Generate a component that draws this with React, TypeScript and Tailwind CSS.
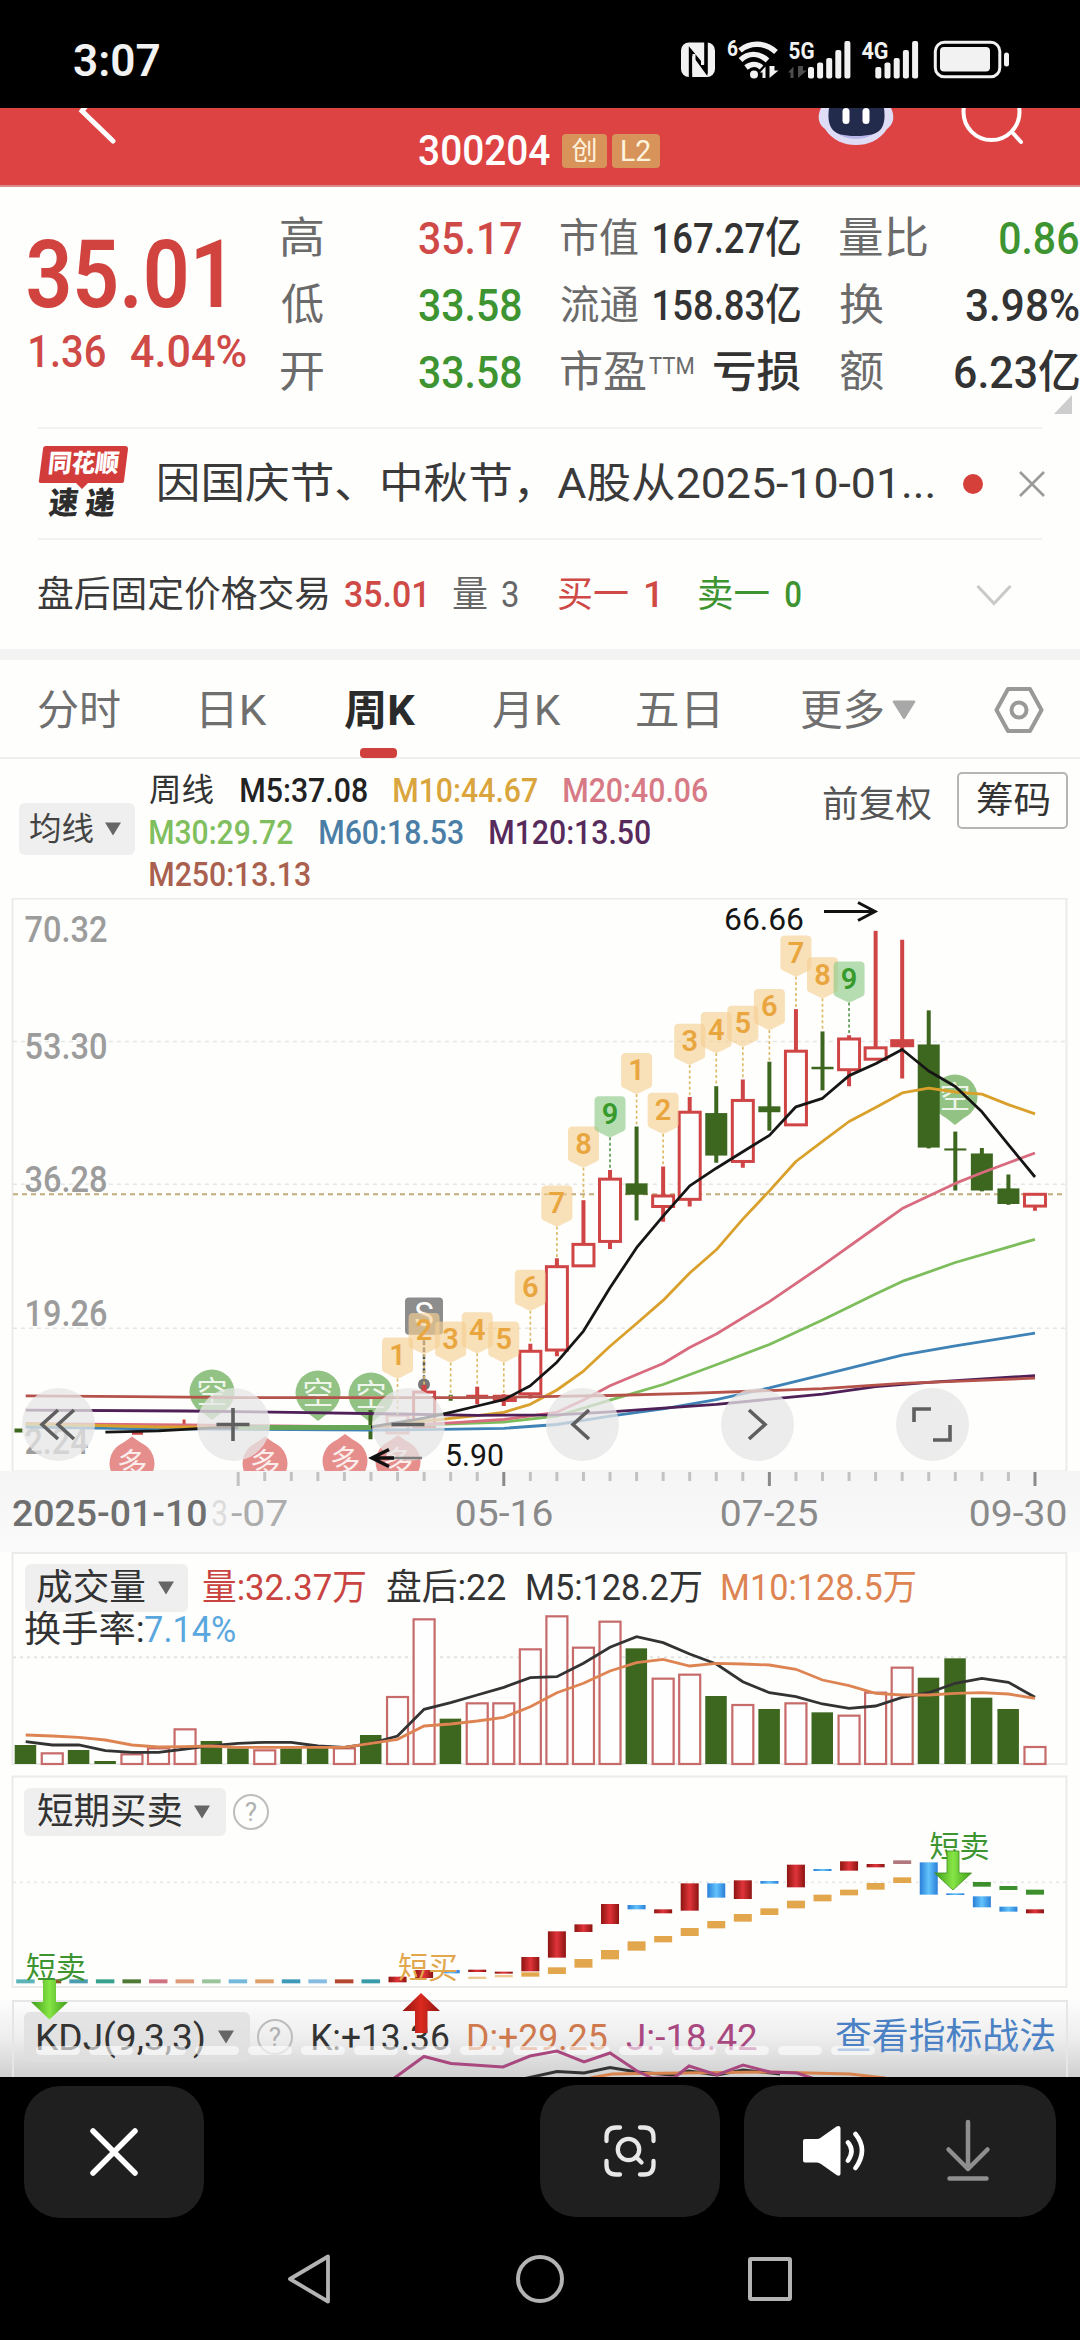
import React, { useLayoutEffect, useRef, useState } from "react";

/** Single-line text whose ink is stretched to the width set by its class. */
function Fit({ children, className = "" }: { children: string; className?: string }) {
  const outer = useRef<HTMLSpanElement>(null);
  const [t, setT] = useState("none");
  useLayoutEffect(() => {
    const el = outer.current;
    const ctx = document.createElement("canvas").getContext("2d");
    if (!el || !ctx) return;
    const s = getComputedStyle(el);
    ctx.font = `${s.fontStyle} ${s.fontWeight} ${s.fontSize} ${s.fontFamily}`;
    const m = ctx.measureText(children);
    const k = el.clientWidth / (m.actualBoundingBoxLeft + m.actualBoundingBoxRight);
    setT(`translateX(${m.actualBoundingBoxLeft * k}px) scaleX(${k})`);
  }, [children]);
  return (
    <span ref={outer} className={"block shrink-0 whitespace-nowrap leading-none " + className}>
      <span className="inline-block origin-left" style={{ transform: t }}>
        {children}
      </span>
    </span>
  );
}

const X = (i: number) => 25.7 + 26.56 * i;
const Y = (p: number) => 890 + p / 2.376;
const V = (p: number) => 1540 + p / 3;
const S = (p: number) => 1770 + p / 3;
const RED = "#cf4545";
const GREEN = "#3d661f";

const line = (f: (p: number) => number, pts: number[][]) =>
  pts.map(([i, p]) => `${X(i).toFixed(1)},${f(p).toFixed(1)}`).join(" ");

type Candle = [number, "r" | "g", number, number, number, number];
const candles: Candle[] = [
  [14, "r", 1248, 1248, 1290, 1290],
  [15, "r", 1178, 1193, 1275, 1275],
  [19, "r", 1078, 1096, 1197, 1208],
  [20, "r", 875, 895, 1093, 1108],
  [21, "r", 737, 842, 893, 893],
  [22, "r", 665, 687, 835, 853],
  [23, "g", 562, 697, 724, 785],
  [24, "r", 657, 727, 752, 788],
  [25, "r", 492, 528, 735, 752],
  [26, "g", 466, 530, 631, 648],
  [27, "r", 450, 500, 645, 660],
  [28, "g", 408, 514, 528, 572],
  [29, "r", 283, 383, 558, 558],
  [30, "g", 336, 420, 426, 476],
  [31, "r", 345, 354, 427, 466],
  [32, "r", 97, 375, 402, 402],
  [33, "r", 118, 358, 370, 448],
  [34, "g", 286, 367, 612, 614],
  [35, "g", 574, 614, 619, 714],
  [36, "g", 613, 626, 714, 716],
  [37, "g", 676, 709, 746, 748],
  [38, "r", 722, 723, 751, 762],
];

const badges: [number, string, number, number][] = [
  [14, "1", 1063, 1248], [15, "2", 1005, 1175], [16, "3", 1025, 1204], [17, "4", 1003, 1180],
  [18, "5", 1025, 1200], [19, "6", 902, 1078], [20, "7", 702, 875], [21, "8", 562, 737],
  [22, "9", 490, 665], [23, "1", 387, 562], [24, "2", 482, 657], [25, "3", 318, 492],
  [26, "4", 290, 466], [27, "5", 275, 450], [28, "6", 235, 408], [29, "7", 108, 283],
  [30, "8", 160, 336], [31, "9", 170, 345],
];

const mas: [string, number[][]][] = [
  ["#3f82b6", [[0, 1276], [4, 1280], [13, 1283], [15, 1282], [18, 1279], [20, 1270], [22, 1250], [24, 1233], [26, 1211], [28, 1183], [30, 1152], [33, 1105], [35, 1083], [38, 1053]]],
  ["#7dbd5c", [[0, 1270], [4, 1274], [13, 1275], [15, 1271], [18, 1264], [20, 1250], [22, 1212], [24, 1175], [26, 1128], [28, 1080], [30, 1022], [32, 960], [33, 930], [35, 885], [38, 830]]],
  ["#d96b7f", [[0, 1268], [6, 1271], [13, 1276], [16, 1266], [18, 1258], [20, 1241], [21, 1212], [22, 1178], [24, 1125], [25, 1087], [26, 1055], [28, 978], [30, 892], [32, 802], [33, 757], [35, 697], [36, 672], [38, 625]]],
  ["#d9a02b", [[0, 1268], [5, 1276], [13, 1276], [15, 1262], [17, 1249], [18, 1241], [19, 1222], [20, 1188], [21, 1143], [22, 1084], [23, 1030], [24, 975], [25, 910], [26, 855], [27, 782], [28, 715], [29, 645], [30, 597], [31, 550], [32, 517], [33, 482], [34, 471], [35, 480], [36, 485], [37, 510], [38, 532]]],
  ["#4f1f57", [[0, 1236], [6, 1238], [10, 1241], [14, 1245], [17, 1248], [20, 1247], [22, 1240], [26, 1222], [30, 1198], [32, 1180], [34, 1170], [38, 1154]]],
  ["#b5534b", [[0, 1202], [4, 1204], [8, 1206], [17, 1206], [20, 1203], [22, 1201], [25, 1196], [30, 1185], [33, 1172], [38, 1160]]],
  ["#161616", [[3, 1288], [5, 1285], [7, 1278], [13, 1276], [15, 1255], [16, 1241], [17, 1226], [18, 1211], [19, 1178], [20, 1122], [21, 1048], [22, 945], [23, 850], [24, 775], [25, 703], [26, 661], [27, 622], [28, 583], [29, 515], [30, 495], [31, 441], [32, 413], [33, 379], [34, 430], [35, 467], [36, 527], [37, 605], [38, 682]]],
];

function Down({ className = "" }: { className?: string }) {
  return (
    <svg viewBox="0 0 18 14" className={"block h-[14px] w-[18px] shrink-0 " + className}>
      <path d="M1 0.5h16L9 13.5z" fill="currentColor" />
    </svg>
  );
}

function Help({ className = "" }: { className?: string }) {
  return (
    <span className={"flex size-9 shrink-0 items-center justify-center rounded-full border-[2.5px] border-[#bdbdbd] text-[26px] leading-none text-[#b0b0b0] " + className}>
      ?
    </span>
  );
}

function StatusBar() {
  return (
    <div className="flex h-[108px] items-start bg-black text-[#f2f2f2]">
      <Fit className="ml-[74px] mt-[38px] w-[85px] text-[45px] font-semibold">3:07</Fit>
      <svg viewBox="680 36 332 46" className="ml-[521px] mt-[36px] h-[46px] w-[332px] shrink-0" fill="#f2f2f2">
        <rect x="681" y="42.5" width="34" height="34.5" rx="8" />
        <path d="M690.5 77V51l15.5 18.5V42" fill="none" stroke="#000" strokeWidth="3.4" />
        <path d="M690 50l16 22V42" fill="none" stroke="#000" strokeWidth="2.6" />
        <path d="M694 54v19M702.500 46v19" stroke="#f2f2f2" strokeWidth="3" />
        <text x="727" y="55.500" fontSize="22" fontWeight="700" textLength="11" lengthAdjust="spacingAndGlyphs">6</text>
        <g fill="none" stroke="#f2f2f2" strokeWidth="5.500">
          <path d="M740 50.500c10-8.500 25-8.500 36 1.500" />
          <path d="M740.500 60c8-7.500 18-7.500 27 0.500" />
          <path d="M746 67.500c5-4 11-4 15.500 0" />
        </g>
        <circle cx="754" cy="74.500" r="4" />
        <path d="M760 72.500l5.500-6V78h-3v-5.500zM769.500 66v12l9-7.500h-4V66z" />
        <text x="788.500" y="59" fontSize="24" fontWeight="700" textLength="26" lengthAdjust="spacingAndGlyphs">5G</text>
        <path d="M788 72.500l5.500-6V78h-3v-5.500zM798 66v12l9-7.500h-4V66z" fill="#4d4d4d" />
        {[67, 62.5, 58, 50, 41].map((y, i) => (
          <rect key={i} x={808 + i * 9.1} y={y} width="6" height={78.5 - y} rx="2" />
        ))}
        <text x="861.500" y="59" fontSize="24" fontWeight="700" textLength="27" lengthAdjust="spacingAndGlyphs">4G</text>
        {[67, 62.5, 58, 50, 41].map((y, i) => (
          <rect key={i} x={875.3 + i * 9.2} y={y} width="6" height={78.5 - y} rx="2" />
        ))}
        <rect x="935.300" y="42.300" width="64.500" height="34.500" rx="9" fill="none" stroke="#f2f2f2" strokeWidth="3" />
        <rect x="940" y="47" width="50" height="24.500" rx="4" />
        <rect x="1004" y="52.500" width="5" height="14" rx="2.500" />
      </svg>
    </div>
  );
}

function Header() {
  return (
    <div className="flex h-[79px] items-start border-b-2 border-[#d98a8a] bg-[#dd4343] text-white">
      <svg viewBox="76 108 44 38" className="ml-[76px] h-[38px] w-[44px] shrink-0" fill="none" stroke="#fff" strokeWidth="5" strokeLinecap="round">
        <path d="M90 101l-8 10 31 30" />
      </svg>
      <Fit className="ml-[299px] mt-[21px] w-[131px] text-[43px] font-medium">300204</Fit>
      <span className="ml-3 mt-[26px] flex h-[34px] w-[45px] items-center justify-center rounded bg-[#d7935a] text-[26px] text-[#fff3de]">创</span>
      <span className="ml-[5px] mt-[26px] flex h-[34px] w-[48px] items-center justify-center rounded bg-[#d7935a] text-[#fff3de]">
        <Fit className="w-[29px] text-[29px]">L2</Fit>
      </span>
      <svg viewBox="818 108 80 42" className="ml-[157px] h-[42px] w-20 shrink-0">
        <path d="M822 108h70c4 8 3 16-4 21-8 12-19 16-31 16s-23-4-31-16c-7-5-8-13-4-21z" fill="#dfdcf6" />
        <path d="M831 122c4 12 14 17 26 17s22-5 26-17z" fill="#b9b6ea" />
        <path d="M830 108h55c1 8 1 15-3 21-4 5-12 7-25 7s-20-2-24-7c-4-6-4-13-3-21z" fill="#232b4d" />
        <rect x="843.500" y="108" width="7" height="16" rx="3.500" fill="#fff" />
        <rect x="863.500" y="108" width="7" height="16" rx="3.500" fill="#fff" />
      </svg>
      <svg viewBox="960 108 70 40" className="ml-[62px] h-10 w-[70px] shrink-0" fill="none" stroke="#fff" strokeWidth="4" strokeLinecap="round">
        <circle cx="992.500" cy="112" r="28" />
        <path d="M1013 132l9 10" />
      </svg>
    </div>
  );
}

function Quote() {
  return (
    <div className="relative flex h-[240px] text-[#333]">
      <div className="flex w-[281px] shrink-0 flex-col">
        <Fit className="ml-7 mt-[41px] w-[194px] text-[94px] font-semibold text-[#d0433f]">35.01</Fit>
        <div className="mt-[7px] flex text-[#cf4a47]">
          <Fit className="ml-[30px] w-[75px] text-[45px] font-medium">1.36</Fit>
          <Fit className="ml-[26px] w-[115px] text-[45px] font-medium">4.04%</Fit>
        </div>
      </div>
      <div className="mt-[18px] flex flex-col text-[#6b6b6b]">
        <div className="flex h-[67px] items-center">
          <Fit className="w-[42px] text-[43px]">高</Fit>
          <Fit className="ml-24 w-[102px] text-[45px] font-medium text-[#cf4a47]">35.17</Fit>
          <Fit className="ml-10 w-[77px] text-[40px]">市值</Fit>
          <Fit className="ml-4 w-[146px] text-[43px] text-[#333] font-medium">167.27亿</Fit>
          <Fit className="ml-[40px] w-[87px] text-[43px]">量比</Fit>
          <Fit className="ml-[73px] w-[78px] text-[45px] font-medium text-[#3d9430]">0.86</Fit>
        </div>
        <div className="flex h-[67px] items-center">
          <Fit className="w-[42px] text-[43px]">低</Fit>
          <Fit className="ml-24 w-[102px] text-[45px] font-medium text-[#3d9430]">33.58</Fit>
          <Fit className="ml-10 w-[77px] text-[40px]">流通</Fit>
          <Fit className="ml-4 w-[146px] text-[43px] text-[#333] font-medium">158.83亿</Fit>
          <Fit className="ml-[40px] w-[43px] text-[43px]">换</Fit>
          <Fit className="ml-[83px] w-[113px] text-[45px] font-medium text-[#333]">3.98%</Fit>
        </div>
        <div className="flex h-[67px] items-center">
          <Fit className="w-[42px] text-[43px]">开</Fit>
          <Fit className="ml-24 w-[102px] text-[45px] font-medium text-[#3d9430]">33.58</Fit>
          <Fit className="ml-10 w-[85px] text-[43px]">市盈</Fit>
          <Fit className="ml-[3px] mb-[14px] w-[44px] text-[24px]">TTM</Fit>
          <Fit className="ml-[21px] w-[86px] text-[43px] text-[#333] font-medium">亏损</Fit>
          <Fit className="ml-[40px] w-[43px] text-[43px]">额</Fit>
          <Fit className="ml-[72px] w-[124px] text-[45px] font-medium text-[#333]">6.23亿</Fit>
        </div>
      </div>
      <svg viewBox="0 0 18 19" className="absolute bottom-[13px] right-[8px] h-[19px] w-[18px]">
        <path d="M18 0v19H0z" fill="#cdcdcd" />
      </svg>
    </div>
  );
}

function News() {
  return (
    <div className="mx-[38px] flex h-[111px] items-center border-t-2 border-[#f2f2f2]">
      <div className="flex h-[78px] w-[92px] shrink-0 flex-col">
        <div className="relative h-[39px] w-[91px]">
          <svg viewBox="0 0 91 46" className="absolute left-0 top-0 h-[46px] w-[91px]">
            <path d="M8 1h79q3 0 3 3l-4 32q0 2-3 2H50l-6 6-6-6H3q-3 0-2-3L5 4q0-3 3-3z" fill="#d23c3a" />
          </svg>
          <Fit className="relative left-[11px] top-[6px] w-[70px] -skew-x-6 text-[25px] font-black text-white">同花顺</Fit>
        </div>
        <Fit className="ml-[11px] mt-[4px] w-[66px] -skew-x-6 text-[31px] font-black text-[#2d2d2d]">速 递</Fit>
      </div>
      <Fit className="ml-[29px] w-[774px] text-[42px] text-[#3a3a3a]">因国庆节、中秋节，A股从2025-10-01...</Fit>
      <span className="ml-[30px] size-5 shrink-0 rounded-full bg-[#d6403b]" />
      <svg viewBox="0 0 26 26" className="ml-[36px] size-[26px] shrink-0" stroke="#9a9a9a" strokeWidth="2.600">
        <path d="M1 1l24 24M25 1L1 25" />
      </svg>
    </div>
  );
}

function FixedPrice() {
  return (
    <div className="mx-[38px] flex h-[111px] items-center border-t-2 border-[#f2f2f2]">
      <Fit className="w-[290px] text-[36px] text-[#3a3a3a]">盘后固定价格交易</Fit>
      <Fit className="ml-[17px] w-[79px] text-[37px] font-medium text-[#cf4a47]">35.01</Fit>
      <Fit className="ml-[29px] w-[34px] text-[36px] text-[#666]">量</Fit>
      <Fit className="ml-[15px] w-4 text-[37px] text-[#666]">3</Fit>
      <Fit className="ml-10 w-[70px] text-[36px] text-[#cf4a47]">买一</Fit>
      <Fit className="ml-[18px] w-[11px] text-[37px] font-medium text-[#cf4a47]">1</Fit>
      <Fit className="ml-[42px] w-[70px] text-[36px] text-[#3d9430]">卖一</Fit>
      <Fit className="ml-[16px] w-4 text-[37px] font-medium text-[#3d9430]">0</Fit>
      <svg viewBox="0 0 36 22" className="ml-[175px] h-[22px] w-9" fill="none" stroke="#c9c9c9" strokeWidth="3">
        <path d="M1.500 2L18 19.500 34.500 2" />
      </svg>
    </div>
  );
}

function Tabs() {
  return (
    <div className="relative flex h-[99px] items-center border-b-2 border-[#efefef] pt-[5px] text-[42px] text-[#6f6f6f]">
      <Fit className="ml-[38px] w-[82px]">分时</Fit>
      <Fit className="ml-[82px] w-[65px]">日K</Fit>
      <div className="ml-[77px] w-[71px] shrink-0">
        <Fit className="w-[71px] font-bold text-[#2b2b2b]">周K</Fit>
        <span className="absolute bottom-[-1px] left-[360px] h-[10px] w-[37px] rounded bg-[#d0403c]" />
      </div>
      <Fit className="ml-[78px] w-[68px]">月K</Fit>
      <Fit className="ml-[76px] w-[80px]">五日</Fit>
      <Fit className="ml-[84px] w-[82px]">更多</Fit>
      <svg viewBox="0 0 24 20" className="mb-[2px] ml-[9px] h-5 w-6 shrink-0">
        <path d="M2 0.500h20q2 0 1 2L13 18.500q-1 1-2 0L1 2.500q-1-2 1-2z" fill="#a8a8a8" />
      </svg>
      <svg viewBox="0 0 50 48" className="mb-[2px] ml-[78px] h-12 w-[50px] shrink-0" fill="none" stroke="#999" strokeWidth="4" strokeLinejoin="round">
        <path d="M14 3h22l11.500 21L36 45H14L2.500 24z" />
        <circle cx="25" cy="24" r="7.500" />
      </svg>
    </div>
  );
}

function Legend() {
  return (
    <div className="flex h-[139px] items-start">
      <div className="ml-[19px] mt-[44px] flex h-[52px] w-[116px] shrink-0 items-center rounded-md bg-[#efefef] text-[#444]">
        <Fit className="ml-[11px] w-[63px] text-[32px]">均线</Fit>
        <Down className="ml-[11px] text-[#666]" />
      </div>
      <div className="ml-[15px] mt-[10px] flex w-[673px] shrink-0 flex-col text-[34px] font-medium">
        <div className="flex h-[42px] items-center">
          <Fit className="w-[63px] text-[32px] font-normal text-[#333]">周线</Fit>
          <Fit className="ml-7 w-[126px] text-[#222]">M5:37.08</Fit>
          <Fit className="ml-[27px] w-[143px] text-[#d9a53c]">M10:44.67</Fit>
          <Fit className="ml-[27px] w-[143px] text-[#d77a86]">M20:40.06</Fit>
        </div>
        <div className="flex h-[42px] items-center">
          <Fit className="w-[143px] text-[#80be5e]">M30:29.72</Fit>
          <Fit className="ml-[27px] w-[143px] text-[#4a7ea6]">M60:18.53</Fit>
          <Fit className="ml-[27px] w-[160px] text-[#572a5c]">M120:13.50</Fit>
        </div>
        <div className="flex h-[42px] items-center">
          <Fit className="w-[160px] text-[#a9604e]">M250:13.13</Fit>
        </div>
      </div>
      <Fit className="mt-[28px] w-[108px] text-[36px] text-[#555]">前复权</Fit>
      <div className="ml-[26px] mt-[13px] flex h-[57px] w-[111px] items-center justify-center rounded-[5px] border-2 border-[#b5b5b5]">
        <Fit className="w-[72px] text-[36px] text-[#333]">筹码</Fit>
      </div>
    </div>
  );
}

function Marker({ x, y, ch, up }: { x: number; y: number; ch: string; up?: boolean }) {
  return (
    <g>
      <circle cx={x} cy={y} r="22.500" fill={up ? "#e58e8b" : "#93c384"} />
      <path d={up ? `M${x - 14} ${y - 17}L${x} ${y - 27}L${x + 14} ${y - 17}z` : `M${x - 14} ${y + 17}L${x} ${y + 28}L${x + 14} ${y + 17}z`} fill={up ? "#e58e8b" : "#93c384"} />
      <text x={x} y={y + 11} textAnchor="middle" fontSize="31" fill="#fff" fillOpacity="0.85">{ch}</text>
    </g>
  );
}

const tools = [
  "M23 8L7 22.500 23 37M39 8L23 22.500 39 37",
  "M6 22.500h33M22.500 6v33",
  "M6 22.500h33",
  "M30 8L14 22.500 30 37",
  "M15 8l16 14.500L15 37",
  "M6 20V7h17M42 23v15H25",
];

function KChart() {
  return (
    <div className="relative h-[573px]">
      <svg viewBox="0 898 1080 573" className="block h-[573px] w-[1080px]">
        <rect x="12.500" y="898.500" width="1054" height="573" fill="none" stroke="#ebebeb" strokeWidth="2" />
        {[360, 699, 1041].map((p) => (
          <path key={p} d={`M13 ${Y(p)}H1066`} stroke="#e6e6e6" strokeWidth="1.500" strokeDasharray="4 4" />
        ))}
        {[["70.32", 95], ["53.30", 373], ["36.28", 690], ["19.26", 1008], ["2.24", 1312]].map(([t, p]) => (
          <text key={t} x="24.500" y={Y(p as number) + 12} fontSize="36" fontWeight="500" fill="#9c9c9c" textLength={t === "2.24" ? 64 : 83} lengthAdjust="spacingAndGlyphs">{t}</text>
        ))}
        <path d={`M13 ${Y(723)}H1066`} stroke="#c2ac7c" strokeWidth="2" strokeDasharray="5 4" />
        <Marker x={132} y={1463.500} ch="多" up />
        <Marker x={265} y={1463.500} ch="多" up />
        <Marker x={345} y={1461} ch="多" up />
        <Marker x={398} y={1462} ch="多" up />
        <Marker x={212} y={1392} ch="空" />
        <Marker x={318} y={1393} ch="空" />
        <Marker x={371} y={1395} ch="空" />
        <Marker x={955} y={1097} ch="空" />
        {candles.map(([i, c, hi, top, bot, lo]) => {
          const x = X(i);
          return c === "r" ? (
            <g key={i} stroke={RED} fill="none" opacity={i === 14 ? 0.6 : 1}>
              <path d={`M${x} ${Y(hi)}V${Y(top)}M${x} ${Y(bot)}V${Y(lo)}`} strokeWidth="4" />
              <rect x={x - 10.5} y={Y(top)} width="21" height={Y(bot) - Y(top)} strokeWidth="3" fill={i === 33 ? RED : "#fefefe"} />
            </g>
          ) : (
            <g key={i} fill={GREEN}>
              <rect x={x - 2} y={Y(hi)} width="4" height={Y(lo) - Y(hi)} />
              <rect x={x - 11} y={Y(top)} width="22" height={Y(bot) - Y(top)} />
            </g>
          );
        })}
        <path d={`M${X(17)} ${Y(1180)}V${Y(1222)}M${X(17) - 11} ${Y(1204)}h22M${X(18)} ${Y(1198)}V${Y(1226)}M${X(18) - 11} ${Y(1212)}h24`} stroke={RED} strokeWidth="4" />
        <path d={`M${X(18) - 11} ${Y(1203)}h22M${X(6) - 1} ${Y(1258)}V${Y(1274)}M132 ${Y(1291)}h11`} stroke={RED} strokeWidth="3" />
        <path d={`M${X(16)} ${Y(1199)}v6M14.500 ${Y(1284)}h8M370.500 1410V${Y(1305)}`} stroke={GREEN} strokeWidth="4" />
        {mas.map(([c, pts]) => (
          <polyline key={c} points={line(Y, pts)} fill="none" stroke={c} strokeWidth="2.800" strokeLinejoin="round" />
        ))}
        <path d={`M${X(8)} ${Y(1277)}H${X(13)}`} stroke="#66a556" strokeWidth="5" />
        <rect x="405" y={Y(968)} width="38" height={(1057 - 968) / 2.376} rx="4" fill="#8d8d8d" />
        <text x="424" y={Y(1010) + 11} fontSize="33" fill="#fff" textAnchor="middle">S</text>
        <path d={`M424 ${Y(1070)}V${Y(1170)}`} stroke="#555" strokeWidth="2.500" strokeDasharray="5 2" />
        <circle cx="424" cy={Y(1175)} r="6" fill="#777" />
        <path d={`M424 ${Y(1176)}v8`} stroke={RED} strokeWidth="5" />
        {badges.map(([i, n, p, stem]) => {
          const x = X(i);
          const y = Y(p);
          const g = n === "9";
          return (
            <g key={i}>
              <path d={`M${x} ${y + 41}V${Y(stem)}`} stroke={g ? "#5d9b56" : "#dcbd6a"} strokeWidth="1.700" strokeDasharray="3 2.500" />
              <path d={`M${x - 11} ${y}h22q4.500 0 4.500 4.500v27q0 3-4 4.200L${x + 3} ${y + 40}q-3 1.500-6 0L${x - 11.5} ${y + 35.7}q-4-1.200-4-4.200v-27q0-4.500 4.500-4.500z`} fill={g ? "#8fcb8b" : "#f5cf94"} fillOpacity="0.650" />
              <text x={x} y={y + 27.500} textAnchor="middle" fontSize="29" fontWeight="600" fill={g ? "#379a2b" : "#e9a63f"}>{n}</text>
            </g>
          );
        })}
        <text x="724" y="930" fontSize="31" fill="#151515" textLength="80" lengthAdjust="spacingAndGlyphs">66.66</text>
        <path d="M824 911.500h50M858 902.500l17 9-17 9" fill="none" stroke="#111" strokeWidth="3" />
        <text x="445" y="1466" fontSize="31" fill="#151515" textLength="59" lengthAdjust="spacingAndGlyphs">5.90</text>
      </svg>
      <div className="absolute left-[22px] top-[490px] flex w-[947px] justify-between">
        {tools.map((d) => (
          <span key={d} className="flex size-[73px] items-center justify-center rounded-full bg-[#e6e6e6]/75">
            <svg viewBox="0 0 48 45" className="h-[45px] w-12" fill="none" stroke="#5f5f5f" strokeWidth="3.600">
              <path d={d} transform={d.startsWith("M6 22.5") ? "translate(1.500 0)" : undefined} />
            </svg>
          </span>
        ))}
      </div>
      <svg viewBox="368 1446 56 24" className="absolute left-[368px] top-[548px] h-6 w-14" fill="none">
        <path d="M422 1458h-30" stroke="#7d7d7d" strokeWidth="2.500" />
        <path d="M394 1458h-21M389 1449.500l-17 8.500 17 8.500" stroke="#111" strokeWidth="3.500" />
      </svg>
    </div>
  );
}

function DateAxis() {
  return (
    <div className="relative flex h-[81px] bg-gradient-to-b from-[#f5f5f5] to-[#fafafa] text-[36px] text-[#8a8a8a]">
      <svg viewBox="0 1471 1080 18" className="absolute left-0 top-0 h-[18px] w-[1080px]">
        {Array.from({ length: 31 }, (_, k) => k + 8).map((i) => (
          <path key={i} d={`M${X(i)} 1472v${i % 10 === 8 ? 14 : 9}`} stroke={i > 8 && i % 10 === 8 ? "#8a8a8a" : "#c2c2c2"} strokeWidth="3" />
        ))}
      </svg>
      <Fit className="ml-[13px] mt-[25px] w-[193px] font-medium text-[#6f6f6f]">2025-01-10</Fit>
      <Fit className="ml-[6px] mt-[25px] w-[14px] text-[#dcdcdc]">3</Fit>
      <Fit className="ml-[5px] mt-[25px] w-[56px] text-[#adadad]">-07</Fit>
      <Fit className="ml-[170px] mt-[25px] w-[95px]">05-16</Fit>
      <Fit className="ml-[170px] mt-[25px] w-[95px]">07-25</Fit>
      <Fit className="ml-[154px] mt-[25px] w-[95px]">09-30</Fit>
    </div>
  );
}

const volTops = "615g 637r 630g 663g 640r 622r 565r 603g 625g 628r 625g 622g 622r 585g 468r 235r 536g 487r 487r 325r 226r 320r 242r 325g 413r 401r 468g 492r 507g 487r 517g 524r 455r 380r 413g 355g 473g 507g 618r".split(" ");
const vol5 = [605, 615, 615, 632, 637, 637, 627, 617, 610, 607, 607, 618, 622, 610, 588, 508, 488, 465, 442, 413, 410, 370, 322, 290, 308, 342, 372, 425, 458, 470, 492, 505, 498, 472, 458, 430, 415, 427, 472];
const vol10 = [585, 588, 592, 600, 615, 621, 620, 618, 622, 622, 622, 622, 622, 610, 598, 558, 552, 543, 532, 500, 458, 430, 393, 368, 358, 378, 370, 372, 375, 388, 420, 437, 460, 465, 465, 460, 458, 462, 475];

function Volume() {
  return (
    <div className="relative h-[212px] text-[36px]">
      <svg viewBox="0 1552 1080 212" className="block h-[212px] w-[1080px] overflow-visible">
        <rect x="12.500" y="1553" width="1054" height="211" fill="none" stroke="#ebebeb" strokeWidth="2" />
        <path d={`M13 ${V(352)}H1066`} stroke="#e3e3e3" strokeWidth="2" strokeDasharray="3 4" />
        {volTops.map((s, i) => {
          const y = V(parseInt(s));
          return s.endsWith("g") ? (
            <rect key={i} x={X(i) - 11} y={y} width="21.500" height={1764 - y} fill={GREEN} />
          ) : (
            <rect key={i} x={X(i) - 10.5} y={y + 1} width="21" height={1763 - y} fill="#fefefe" stroke="#c66a6a" strokeWidth="2.200" />
          );
        })}
        <polyline points={line(V, vol5.map((p, i) => [i, p]))} fill="none" stroke="#333" strokeWidth="2.800" />
        <polyline points={line(V, vol10.map((p, i) => [i, p]))} fill="none" stroke="#dd8452" strokeWidth="2.800" />
      </svg>
      <div className="absolute left-[25px] top-3 flex flex-col">
        <div className="flex h-12 items-center">
          <div className="flex h-12 w-[163px] shrink-0 items-center rounded-md bg-[#efefef] text-[#333]">
            <Fit className="ml-3 w-[108px]">成交量</Fit>
            <Down className="ml-3 text-[#666]" />
          </div>
          <Fit className="ml-[15px] w-[162px] text-[#c94440]">量:32.37万</Fit>
          <Fit className="ml-[22px] w-[118px] text-[#333]">盘后:22</Fit>
          <Fit className="ml-[22px] w-[174px] text-[#333]">M5:128.2万</Fit>
          <Fit className="ml-[21px] w-[193px] text-[#dd8452]">M10:128.5万</Fit>
        </div>
        <div className="flex h-9 items-center">
          <Fit className="w-[118px] text-[#333]">换手率:</Fit>
          <Fit className="ml-[2px] w-[90px] text-[#5aa7de]">7.14%</Fit>
        </div>
      </div>
    </div>
  );
}

const early = ["#5cb3b8", "#8a5a2a", "#4d9db0", "#38a08c", "#4f7a35", "#cf7480", "#dd9a78", "#9bc49b", "#74b8dc", "#dda06a", "#3f9ab8", "#86bce0", "#b5492f", "#3a9ba8"];
const sig: [number, "r" | "b" | "p", number, number][] = [
  [14, "r", 620, 637], [15, "r", 600, 624], [16, "b", 600, 610], [17, "r", 599, 606], [18, "r", 605, 611],
  [19, "r", 561, 604], [20, "r", 484, 563], [21, "r", 463, 486], [22, "r", 402, 462], [23, "b", 405, 418],
  [24, "r", 418, 430], [25, "r", 340, 422], [26, "b", 340, 383], [27, "r", 331, 387], [28, "b", 333, 341],
  [29, "r", 284, 352], [30, "b", 297, 303], [31, "r", 274, 302], [32, "r", 282, 292], [33, "p", 271, 282],
  [34, "b", 277, 374], [35, "b", 370, 375], [36, "b", 379, 412], [37, "b", 410, 425], [38, "r", 418, 430],
];
const gold = [[17, 620, 627], [18, 615, 622], [19, 607, 620], [20, 592, 612], [21, 567, 593], [22, 540, 568], [23, 514, 542], [24, 498, 517], [25, 474, 498], [26, 453, 475], [27, 432, 455], [28, 415, 435], [29, 392, 415], [30, 374, 394], [31, 359, 376], [32, 339, 359], [33, 322, 339]];

function ShortTerm() {
  return (
    <div className="relative z-10 mt-3 h-[211px] text-[36px]">
      <svg viewBox="0 1776 1080 211" className="block h-[211px] w-[1080px] overflow-visible">
        <defs>
          <linearGradient id="r"><stop offset="0" stopColor="#8c1511" /><stop offset=".5" stopColor="#e0343a" /><stop offset="1" stopColor="#8c1511" /></linearGradient>
          <linearGradient id="b"><stop offset="0" stopColor="#2a7fd8" /><stop offset=".5" stopColor="#62c3fb" /><stop offset="1" stopColor="#2a7fd8" /></linearGradient>
          <linearGradient id="p"><stop offset="0" stopColor="#b0787c" /><stop offset="1" stopColor="#b0787c" /></linearGradient>
          <linearGradient id="ga"><stop offset="0" stopColor="#3f9c1a" /><stop offset=".5" stopColor="#86e545" /><stop offset="1" stopColor="#3f9c1a" /></linearGradient>
          <linearGradient id="ra"><stop offset="0" stopColor="#8f1511" /><stop offset=".5" stopColor="#dc2a20" /><stop offset="1" stopColor="#8f1511" /></linearGradient>
        </defs>
        <rect x="12.500" y="1776.500" width="1054" height="210.500" fill="none" stroke="#ebebeb" strokeWidth="2" />
        <path d={`M13 ${S(337)}H1066`} stroke="#ececec" strokeWidth="2" strokeDasharray="3 4" />
        {early.map((c, i) => (
          <rect key={i} x={X(i) - 9.5} y={S(628)} width="18.500" height="4" fill={c} />
        ))}
        {gold.map(([i, a, b]) => (
          <rect key={i} x={X(i) - 9} y={S(a)} width="18" height={(b - a) / 3} fill="#e2a64c" opacity={i < 19 ? 0.6 : 1} />
        ))}
        {sig.map(([i, c, a, b]) => (
          <rect key={i} x={X(i) - 9} y={S(a)} width="18" height={(b - a) / 3} fill={`url(#${c})`} />
        ))}
        {[[36, 336, 350], [37, 348, 360], [38, 359, 374]].map(([i, a, b]) => (
          <rect key={i} x={X(i) - 9} y={S(a)} width="18" height={(b - a) / 3} fill="#3c8f2c" />
        ))}
        <g fontSize="30">
          <text x="26" y="1978" fill="#3d9430">短卖</text>
          <text x="398" y="1978" fill="#e2a64c">短买</text>
          <text x="929.500" y="1857" fill="#3d9430">短卖</text>
        </g>
        <path d="M43 1980h13v22h12l-18.500 17.500L31 2002h12z" fill="url(#ga)" />
        <path d="M947 1851h12v22h12.500L953 1890l-18.500-17H947z" fill="url(#ga)" stroke="#3f8f1e" strokeWidth="0.800" />
        <path d="M415 2033h12.500v-22H440l-19-18-18.500 18H415z" fill="url(#ra)" />
      </svg>
      <div className="absolute left-6 top-3 flex items-center">
        <div className="flex h-12 w-[202px] items-center rounded-md bg-[#efefef] text-[#333]">
          <Fit className="ml-[14px] w-[144px]">短期买卖</Fit>
          <Down className="ml-[11px] text-[#666]" />
        </div>
        <Help className="ml-[7px]" />
      </div>
    </div>
  );
}

function Kdj() {
  return (
    <div className="relative mt-[13px] h-[77px] overflow-hidden bg-gradient-to-b from-[#fdfdfd] via-[#ededed] to-[#d0d0d0] text-[37px]">
      <div className="absolute inset-x-3 top-0 h-24 border-2 border-[#e6e6e6]" />
      <div className="relative flex pt-3">
        <div className="ml-6 flex h-[50px] w-[226px] shrink-0 items-center rounded-md bg-[#dedede]/80 text-[#333]">
          <Fit className="ml-[14px] w-[166px]">KDJ(9,3,3)</Fit>
          <Down className="ml-[13px] text-[#666]" />
        </div>
        <Help className="ml-[7px] mt-[7px]" />
        <Fit className="ml-5 mt-[7px] w-[136px] text-[#333]">K:+13.36</Fit>
        <Fit className="ml-5 mt-[7px] w-[138px] text-[#cf7a4e]">D:+29.25</Fit>
        <Fit className="ml-[19px] mt-[7px] w-[131px] text-[#a8487f]">J:-18.42</Fit>
        <Fit className="ml-[79px] mt-[7px] w-[218px] text-[36px] text-[#4a80c4]">查看指标战法</Fit>
      </div>
      <svg viewBox="0 2000 1080 77" className="absolute left-0 top-0 h-[77px] w-[1080px]" fill="none" strokeWidth="3">
        <g fill="#fff" stroke="none" fillOpacity="0.6">
          {Array.from({ length: 16 }, (_, i) => (
            <rect key={i} x={36 + i * 53} y="2046" width="44" height="9" rx="4.500" />
          ))}
          {[16, 17, 18].map((i) => (
            <rect key={i} x={36 + i * 53} y="2046" width="44" height="9" rx="4.500" fillOpacity="0.120" />
          ))}
        </g>
        <polyline points="523,2079 557,2071.500 584,2073 610,2067.500 637,2072 672,2075 689,2071 717,2075 743,2070 780,2074" stroke="#333" />
        <polyline points="590,2078 612,2074 640,2073.500 770,2072 850,2074 885,2078" stroke="#d9844f" />
        <polyline points="393,2079 424,2056.500 451,2063.500 503,2067 530,2056 557,2051 584,2062 610,2053 637,2071 652,2078 674,2078 689,2066 717,2075 743,2065 770,2072 797,2073 815,2079" stroke="#a8487f" />
      </svg>
    </div>
  );
}

function Controls() {
  return (
    <div className="flex h-[263px] flex-col bg-black">
      <div className="flex h-[140px] pl-6 pt-2">
        <div className="mt-[1px] flex h-[132px] w-[180px] items-center justify-center rounded-[36px] bg-[#1f1f1f]">
          <svg viewBox="0 0 50 50" className="size-[50px]" stroke="#fff" strokeWidth="5.500" strokeLinecap="round">
            <path d="M4 4l42 42M46 4L4 46" />
          </svg>
        </div>
        <div className="ml-[336px] flex h-[132px] w-[180px] items-center justify-center rounded-[36px] bg-[#1f1f1f]">
          <svg viewBox="0 0 52 52" className="size-[52px]" fill="none" stroke="#e8e8e8" strokeWidth="4.300" strokeLinecap="round">
            <path d="M2.500 16v-4q0-9.500 9.500-9.500h4M36 2.500h4q9.500 0 9.500 9.500v4M49.500 36v4q0 9.500-9.500 9.500h-4M16 49.500h-4q-9.500 0-9.500-9.500v-4" />
            <circle cx="24.500" cy="24.500" r="10.700" />
            <path d="M32 32l5.500 5.500" />
          </svg>
        </div>
        <div className="ml-6 flex h-[132px] w-[312px] items-start rounded-[36px] bg-[#1f1f1f]">
          <svg viewBox="0 0 64 52" className="ml-[58px] mt-[40px] h-[52px] w-16">
            <path d="M3 14h12q2 0 4-1.500L34.500 1.500Q38 0 38.500 3v46q-.5 3-4 1L19 39q-2-1.500-4-1.500H3q-2 0-2-2V16q0-2 2-2z" fill="#fff" />
            <path d="M46 17.500q7 8 0 18M53.500 9q13 16 0 34" fill="none" stroke="#fff" strokeWidth="4.600" strokeLinecap="round" />
          </svg>
          <svg viewBox="0 0 46 62" className="ml-[79px] mt-[34px] h-[62px] w-[46px]" fill="none" stroke="#8f8f8f" strokeWidth="4.500" strokeLinecap="round" strokeLinejoin="round">
            <path d="M23 3v47M3.500 30.500L23 50l19.500-19.500M4.500 59.500h37" />
          </svg>
        </div>
      </div>
      <div className="flex h-[130px] items-center">
        <svg viewBox="0 0 44 50" className="ml-[287px] h-[50px] w-11" fill="none" stroke="#b3b3b3" strokeWidth="3.800" strokeLinejoin="round">
          <path d="M41 2.500v45L3 25z" />
        </svg>
        <span className="ml-[185px] size-12 rounded-full border-4 border-[#b3b3b3]" />
        <span className="ml-[184px] size-[44px] rounded-[3px] border-4 border-[#b3b3b3]" />
      </div>
    </div>
  );
}

export default function App() {
  return (
    <div className="h-[2340px] w-[1080px] overflow-hidden bg-[#fefefd] font-['Roboto','Noto_Sans_CJK_SC',sans-serif]">
      <StatusBar />
      <Header />
      <Quote />
      <News />
      <FixedPrice />
      <div className="h-[11px] bg-[#f3f3f4]" />
      <Tabs />
      <Legend />
      <KChart />
      <DateAxis />
      <Volume />
      <ShortTerm />
      <Kdj />
      <Controls />
    </div>
  );
}
